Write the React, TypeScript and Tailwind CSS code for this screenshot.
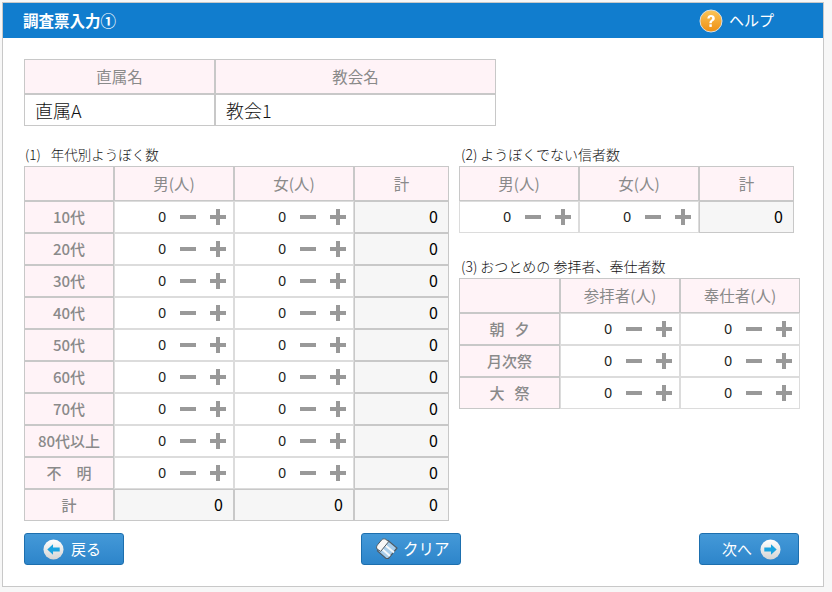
import React from 'react';

const font = { fontFamily: '"Noto Sans CJK JP", "Liberation Sans", sans-serif' };

const th = 'h-[35px] border border-[#c8c8c8] bg-[#fff3f7] p-0 text-center align-middle text-[15.5px] font-normal text-[#8a8a8a]';
const rowHead = 'h-[32px] border border-[#c8c8c8] bg-[#fff3f7] p-0 text-center align-middle text-[15px] font-medium text-[#8a8a8a]';
const totalCell = 'h-[32px] border border-[#c8c8c8] bg-[#f6f6f6] p-0 pb-[2px] pr-[10px] text-right align-middle text-[16px] font-normal text-black';
const caption = 'h-[20px] font-light leading-[17px] text-[#111]';

const Counter = () => (
  <td className="h-[32px] border border-[#dcdcdc] bg-white p-0 align-middle">
    <div className="flex items-center justify-end pr-[7px]">
      <span className="mr-[14px] text-[14px] leading-none text-[#222] [font-family:'Liberation_Sans']">0</span>
      <svg width="16" height="16" viewBox="0 0 16 16" className="mr-[14px]">
        <rect x="0" y="6" width="16" height="4" fill="#999" />
      </svg>
      <svg width="16" height="16" viewBox="0 0 16 16">
        <rect x="0" y="6" width="16" height="4" fill="#999" />
        <rect x="6" y="0" width="4" height="16" fill="#999" />
      </svg>
    </div>
  </td>
);

const ArrowIcon = ({ dir }: { dir: 'left' | 'right' }) => (
  <svg width="21" height="21" viewBox="0 0 22 22">
    <defs>
      <linearGradient id={`ball-${dir}`} x1="0" y1="0" x2="0" y2="1">
        <stop offset="0" stopColor="#ffffff" />
        <stop offset="1" stopColor="#d4d4d4" />
      </linearGradient>
    </defs>
    <circle cx="11" cy="11" r="10.5" fill={`url(#ball-${dir})`} />
    <path
      d={dir === 'left' ? 'M4.500 11l6-5.500v3.500h7v4h-7v3.500z' : 'M17.500 11l-6-5.500v3.500h-7v4h7v3.500z'}
      fill="#1ba3e0"
    />
  </svg>
);

const EraserIcon = () => (
  <svg width="24" height="22" viewBox="0 0 24 22" className="shrink-0">
    {/* body */}
    <path d="M6.500 7.500L13 2.500l9 7.500-8.500 10.500-2.500 0L2.500 13z" fill="#a8cdea" stroke="#4f5a63" strokeWidth="1.200" />
    {/* stripes */}
    <path d="M10.500 7.500l8.500 7M7 11l8 7" stroke="#f4f8fb" strokeWidth="2" fill="none" />
    {/* cap */}
    <path d="M2 11c-.8-1.500-.5-3 .8-4.500L6.500 2c1.200-1.200 2.800-1.500 4.200-.7l3 2.300-8 9.800z" fill="#f7f7f7" stroke="#4f5a63" strokeWidth="1" />
  </svg>
);

const Button = ({ children, className }: { children: React.ReactNode; className: string }) => (
  <button className={`flex h-[32px] w-[100px] items-center rounded-[3px] border border-[#1d6fae] bg-gradient-to-b from-[#4499d8] to-[#2d85ca] text-[15px] text-white ${className}`}>
    {children}
  </button>
);

const ages = ['10代', '20代', '30代', '40代', '50代', '60代', '70代', '80代以上', '不\u3000明'];
const services = ['朝\u00a0\u00a0\u00a0夕', '月次祭', '大\u00a0\u00a0\u00a0祭'];

export default function App() {
  return (
    <div className="h-[592px] w-[832px] bg-[#f7f7f7] pl-[2px] pt-[2px]" style={font}>
      <div className="h-[585px] w-[822px] border border-[#c8c8c8] bg-white">
        <div className="flex h-[35px] items-center justify-between bg-[#117dce] pl-[20px] pr-[49px] text-white">
          <h1 className="text-[15.5px] font-bold">調査票入力①</h1>
          <div className="flex items-center gap-[6px] text-[15px]">
            <svg width="24" height="24" viewBox="0 0 24 24">
              <defs>
                <linearGradient id="help" x1="0" y1="0" x2="0" y2="1">
                  <stop offset="0" stopColor="#fbc65a" />
                  <stop offset="1" stopColor="#ee8f12" />
                </linearGradient>
              </defs>
              <circle cx="12" cy="12" r="11" fill="url(#help)" stroke="#d9dfe3" strokeWidth="1" />
              <path d="M8.300 9.500C8.500 7 10 6 12 6s3.800 1.200 3.800 3.200c0 2.800-3 2.600-3 5h-2.400c0-3.400 2.800-3.200 2.800-5 0-.8-.5-1.200-1.200-1.200-.9 0-1.300.6-1.400 1.500z" fill="#fff" />
              <rect x="10.400" y="15.300" width="2.400" height="2.600" fill="#fff" />
            </svg>
            <span>ヘルプ</span>
          </div>
        </div>

        <div className="px-[21px] pt-[21px]">
          <table className="w-[472px] table-fixed border-separate border-spacing-0">
            <thead>
              <tr>
                <th className={`${th} w-[191px] font-medium`}>直属名</th>
                <th className={`${th} font-medium`}>教会名</th>
              </tr>
            </thead>
            <tbody>
              <tr>
                <td className="h-[32px] border border-[#c8c8c8] pl-[10px] text-[18px] font-light text-[#111]">直属A</td>
                <td className="h-[32px] border border-[#c8c8c8] pl-[10px] text-[18px] font-light text-[#111]">教会1</td>
              </tr>
            </tbody>
          </table>

          <div className="mt-[20px] flex gap-[10px]">
            <section className="w-[425px]">
              <p className={`${caption} text-[13.5px]`}>
                <span className="mr-[10px] pl-[1px]">(1)</span>年代別ようぼく数
              </p>
              <table className="w-[425px] table-fixed border-separate border-spacing-0">
                <thead>
                  <tr>
                    <th className={`${th} w-[90px]`}></th>
                    <th className={`${th} w-[120px]`}>男(人)</th>
                    <th className={`${th} w-[120px]`}>女(人)</th>
                    <th className={th}>計</th>
                  </tr>
                </thead>
                <tbody>
                  {ages.map((age) => (
                    <tr key={age}>
                      <td className={rowHead}>{age}</td>
                      <Counter />
                      <Counter />
                      <td className={totalCell}>0</td>
                    </tr>
                  ))}
                  <tr>
                    <td className={rowHead}>計</td>
                    <td className={totalCell}>0</td>
                    <td className={totalCell}>0</td>
                    <td className={totalCell}>0</td>
                  </tr>
                </tbody>
              </table>
            </section>

            <div>
              <section className="w-[335px]">
                <p className={`${caption} text-[14px]`}>
                  <span className="mr-[3px] pl-[2px]">(2)</span>ようぼくでない信者数
                </p>
                <table className="w-[335px] table-fixed border-separate border-spacing-0">
                  <thead>
                    <tr>
                      <th className={`${th} w-[120px]`}>男(人)</th>
                      <th className={`${th} w-[120px]`}>女(人)</th>
                      <th className={th}>計</th>
                    </tr>
                  </thead>
                  <tbody>
                    <tr>
                      <Counter />
                      <Counter />
                      <td className={totalCell}>0</td>
                    </tr>
                  </tbody>
                </table>
              </section>

              <section className="mt-[25px] w-[341px]">
                <p className={`${caption} text-[14px]`}>
                  <span className="mr-[3px] pl-[2px]">(3)</span>おつとめの 参拝者、奉仕者数
                </p>
                <table className="w-[341px] table-fixed border-separate border-spacing-0">
                  <thead>
                    <tr>
                      <th className={`${th} w-[101px]`}></th>
                      <th className={`${th} w-[120px]`}>参拝者(人)</th>
                      <th className={th}>奉仕者(人)</th>
                    </tr>
                  </thead>
                  <tbody>
                    {services.map((name) => (
                      <tr key={name}>
                        <td className={rowHead}>{name}</td>
                        <Counter />
                        <Counter />
                      </tr>
                    ))}
                  </tbody>
                </table>
              </section>
            </div>
          </div>

          <div className="mt-[12px] flex w-[775px] gap-[237px]">
            <Button className="gap-[7px] pl-[18px]">
              <ArrowIcon dir="left" />
              <span>戻る</span>
            </Button>
            <Button className="gap-[4px] pl-[13px]">
              <EraserIcon />
              <span className="text-[15.5px]">クリア</span>
            </Button>
            <Button className="ml-auto gap-[8px] pl-[22px]">
              <span>次へ</span>
              <ArrowIcon dir="right" />
            </Button>
          </div>
        </div>
      </div>
    </div>
  );
}
